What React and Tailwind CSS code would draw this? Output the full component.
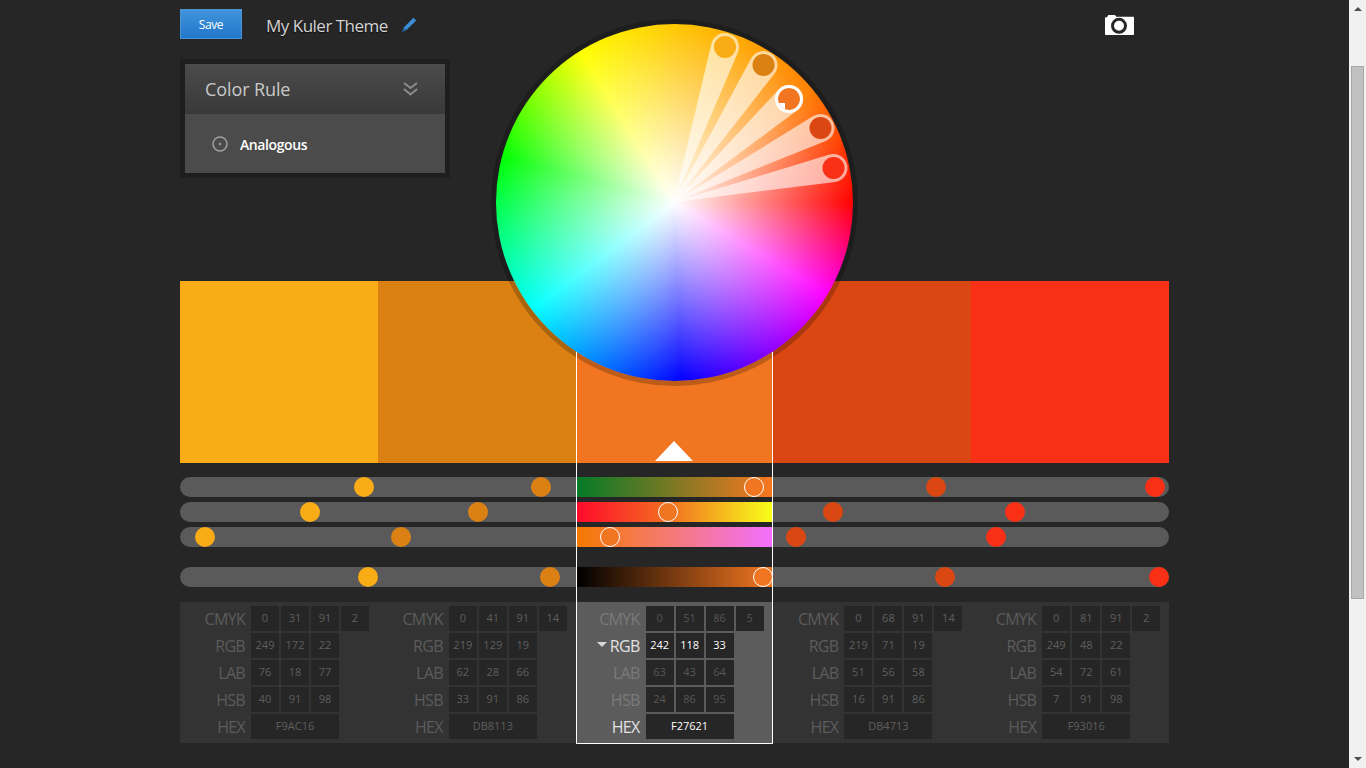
import React from "react";

const swatches = ["#F9AC16", "#DB8113", "#F27621", "#DB4713", "#F93016"];

// handle x positions on each slider, measured from the left of the track
const sliderRows = [
  { stops: [184, 361, 574, 756, 975], grad: "bg-[linear-gradient(90deg,#047a28,#f97720)]" },
  { stops: [130, 298, 488, 653, 835], grad: "bg-[linear-gradient(90deg,#ff0a2a,#f27621_50%,#f8ff1a)]" },
  { stops: [25, 221, 430, 616, 816], grad: "bg-[linear-gradient(90deg,#f57900,#f47a7a_50%,#f26fff)]" },
  { stops: [188, 370, 583, 765, 979], grad: "bg-[linear-gradient(90deg,#000000,#f27621)]" },
];

const values = [
  { CMYK: [0, 31, 91, 2], RGB: [249, 172, 22], LAB: [76, 18, 77], HSB: [40, 91, 98], HEX: "F9AC16" },
  { CMYK: [0, 41, 91, 14], RGB: [219, 129, 19], LAB: [62, 28, 66], HSB: [33, 91, 86], HEX: "DB8113" },
  { CMYK: [0, 51, 86, 5], RGB: [242, 118, 33], LAB: [63, 43, 64], HSB: [24, 86, 95], HEX: "F27621" },
  { CMYK: [0, 68, 91, 14], RGB: [219, 71, 19], LAB: [51, 56, 58], HSB: [16, 91, 86], HEX: "DB4713" },
  { CMYK: [0, 81, 91, 2], RGB: [249, 48, 22], LAB: [54, 72, 61], HSB: [7, 91, 98], HEX: "F93016" },
];

const wheelHandles = [
  { x: 725, y: 47, color: "#F9AC16" },
  { x: 763.5, y: 65, color: "#DB8113" },
  { x: 789, y: 99, color: "#F27621", base: true },
  { x: 820.5, y: 128, color: "#DB4713" },
  { x: 833.5, y: 168, color: "#F93016" },
];

// tapered spoke from the wheel centre, tangent to the handle's ring
function spokePath(h) {
  const cx = 674;
  const cy = 202;
  const r = 14;
  const dx = h.x - cx;
  const dy = h.y - cy;
  const d = Math.hypot(dx, dy);
  const a = Math.atan2(dy, dx);
  const b = Math.asin(r / d);
  const l = Math.sqrt(d * d - r * r);
  const p1 = [cx + l * Math.cos(a - b), cy + l * Math.sin(a - b)];
  const p2 = [cx + l * Math.cos(a + b), cy + l * Math.sin(a + b)];
  return `M${cx} ${cy}L${p1[0]} ${p1[1]}A${r} ${r} 0 1 1 ${p2[0]} ${p2[1]}Z`;
}

function ColorWheel() {
  return (
    <div className="absolute left-[316px] top-[24px] z-30 h-[357px] w-[357px] rounded-full bg-[image:radial-gradient(closest-side,#ffffff,rgba(255,255,255,0)),conic-gradient(from_90deg,#ff0000_0deg,#ff00ff_31deg,#0000ff_88deg,#00ffff_143deg,#00ff00_195deg,#ffff00_238deg,#ffc400_272deg,#ff8000_320deg,#ff0000_360deg)]">
      <svg viewBox="496 24 357 357" className="h-full w-full">
        {wheelHandles.map((h) => (
          <g key={h.x}>
            <path d={spokePath(h)} fill="#ffffff" fillOpacity="0.6" />
            <circle cx={h.x} cy={h.y} r="11" fill={h.color} />
            {h.base && (
              <>
                <circle cx={h.x} cy={h.y} r="12.5" fill="none" stroke="#ffffff" strokeWidth="3" />
                <path d="M785 103L778.8 103A11 11 0 0 0 785 109.2Z" fill="#ffffff" />
              </>
            )}
          </g>
        ))}
      </svg>
    </div>
  );
}

function Slider({ row }) {
  return (
    <div className="relative h-5 rounded-full bg-[#5a5a5a]">
      <div className={`absolute left-[397px] top-0 h-5 w-[195px] ${row.grad}`}></div>
      {row.stops.map((x, i) => (
        <div
          key={i}
          style={{ left: x - 10, backgroundColor: swatches[i] }}
          className={`absolute top-0 h-5 w-5 rounded-full ${i === 2 ? "border border-white" : ""}`}
        ></div>
      ))}
    </div>
  );
}

function ValueRow({ label, nums, selected, active }) {
  let labelColor = "text-[#5c5c5c]";
  if (selected) labelColor = active ? "text-[#e2e2e2]" : "text-[#7a7a7a]";
  let cellColor = "text-[#5f5f5f]";
  if (selected) cellColor = active ? "text-white" : "text-[#565656]";

  return (
    <div className="flex h-[25px] items-center">
      <div
        className={`relative text-right text-[16px] tracking-[-0.7px] ${selected ? "w-[64px]" : "w-[65px]"} ${labelColor}`}
      >
        {selected && label === "RGB" && (
          <span className="absolute left-[21px] top-[8px] h-0 w-0 border-x-[5px] border-t-[5px] border-x-transparent border-t-[#d8d8d8]"></span>
        )}
        {label}
      </div>
      <div className={`ml-[6px] flex gap-[2px] text-[11px] ${cellColor}`}>
        {Array.isArray(nums) ? (
          nums.map((n, i) => (
            <div key={i} className="flex h-[25px] w-[28px] items-center justify-center bg-[#262626]">
              {n}
            </div>
          ))
        ) : (
          <div className="flex h-[25px] w-[88px] items-center justify-center bg-[#262626]">{nums}</div>
        )}
      </div>
    </div>
  );
}

function ValueColumn({ data, selected }) {
  return (
    <div className={`flex flex-col gap-[2px] py-[4px] ${selected ? "bg-[#5c5c5c]" : ""}`}>
      <ValueRow label="CMYK" nums={data.CMYK} selected={selected} />
      <ValueRow label="RGB" nums={data.RGB} selected={selected} active />
      <ValueRow label="LAB" nums={data.LAB} selected={selected} />
      <ValueRow label="HSB" nums={data.HSB} selected={selected} />
      <ValueRow label="HEX" nums={data.HEX} selected={selected} active />
    </div>
  );
}

function Scrollbar() {
  return (
    <div className="flex h-[768px] w-[17px] shrink-0 flex-col items-center bg-[#f1f1f1] pb-[7px] pt-[7px]">
      <span className="h-0 w-0 border-x-[4px] border-b-[4px] border-x-transparent border-b-[#505050]"></span>
      <div className="mt-[55px] h-[533px] w-[13px] border border-[#a9a9a9] bg-[#c1c1c1]"></div>
      <span className="mt-auto h-0 w-0 border-x-[4px] border-t-[4px] border-x-transparent border-t-[#505050]"></span>
    </div>
  );
}

export default function App() {
  return (
    <div className="flex h-[768px] overflow-hidden bg-[#262626] font-['Open_Sans',sans-serif]">
      <div className="min-w-0 flex-1">
        <div className="relative mx-auto w-[989px]">
          {/* Header */}
          <div className="flex items-center pt-[9px]">
            <button className="h-[30px] w-[62px] border border-[#4a94d4] bg-[linear-gradient(#3f94dc,#2276c8)] pt-[1px] text-[12px] tracking-[-0.4px] text-white">
              Save
            </button>
            <span className="ml-[24px] mt-[4px] text-[17px] tracking-[-0.5px] text-[#d4d4d4] [text-shadow:0_1px_1px_rgba(0,0,0,0.7)]">
              My Kuler Theme
            </span>
            <svg viewBox="0 0 16 16" className="ml-[13px] mt-[2px] h-[16px] w-[16px]">
              <path d="M12.4.8L15.2 3.4 5.2 13.3 2.6 10.8Z" fill="#3a8fd8" />
              <path d="M2.6 10.8L5.2 13.3 1 15Z" fill="#1f6cae" />
            </svg>
            <svg viewBox="0 0 29 20" className="ml-auto mr-[35px] mt-[2px] h-[20px] w-[29px]">
              <path
                d="M1 2.2H2L3 .4C3.2.1 3.4 0 3.8 0H9.6C10 0 10.3.2 10.5.6L11.2 1.8H28C28.6 1.8 29 2.2 29 2.8V19C29 19.6 28.6 20 28 20H1C.4 20 0 19.6 0 19V3.2C0 2.6.4 2.2 1 2.2Z"
                fill="#ffffff"
              />
              <circle cx="14" cy="10.8" r="6.5" fill="none" stroke="#262626" strokeWidth="3" />
            </svg>
          </div>

          {/* Color rule panel */}
          <div className="mt-[20px] w-[270px] border-[5px] border-[#1e1e1e]">
            <div className="flex h-[50px] items-center justify-between bg-[linear-gradient(#4b4b4b,#393939)] pl-[20px] pr-[27px]">
              <span className="text-[18px] tracking-[-0.1px] text-[#c9c9c9]">Color Rule</span>
              <svg viewBox="0 0 15 14" className="h-[14px] w-[15px]" fill="none" stroke="#8c8c8c" strokeWidth="2">
                <path d="M1 1L7.5 6 14 1" />
                <path d="M1 7L7.5 12.5 14 7" />
              </svg>
            </div>
            <div className="flex h-[59px] items-center bg-[#4b4b4b] pl-[27px]">
              <svg viewBox="0 0 16 16" className="h-[16px] w-[16px]">
                <circle cx="8" cy="8" r="7" fill="none" stroke="#a0a0a0" strokeWidth="1.5" />
                <circle cx="8" cy="8" r="1.2" fill="#a0a0a0" />
              </svg>
              <span className="ml-[12px] mt-[1px] text-[14px] font-semibold tracking-[-0.4px] text-white">
                Analogous
              </span>
            </div>
          </div>

          {/* Swatches */}
          <div className="mt-[103px] grid h-[182px] grid-cols-5">
            {swatches.map((c, i) => (
              <div key={c} style={{ backgroundColor: c }} className="relative">
                {i === 2 && (
                  <span className="absolute bottom-[2px] left-[79px] h-0 w-0 border-x-[19px] border-b-[20px] border-x-transparent border-b-white"></span>
                )}
              </div>
            ))}
          </div>

          {/* Sliders */}
          <div className="mt-[14px] flex flex-col gap-[5px]">
            <Slider row={sliderRows[0]} />
            <Slider row={sliderRows[1]} />
            <Slider row={sliderRows[2]} />
            <div className="mt-[15px]">
              <Slider row={sliderRows[3]} />
            </div>
          </div>

          {/* Values */}
          <div className="mt-[15px] grid grid-cols-5 bg-[#333333]">
            {values.map((v, i) => (
              <ValueColumn key={v.HEX} data={v} selected={i === 2} />
            ))}
          </div>

          {/* selected column outline, wheel shadow and wheel sit over the page */}
          <div className="pointer-events-none absolute left-[396px] top-[281px] z-20 h-[463px] w-[197px] border border-white"></div>
          <div className="absolute left-[316px] top-[24px] z-10 h-[357px] w-[357px] rounded-full shadow-[0_0_0_5px_rgba(0,0,0,0.22)]"></div>
          <ColorWheel />
        </div>
      </div>
      <Scrollbar />
    </div>
  );
}
